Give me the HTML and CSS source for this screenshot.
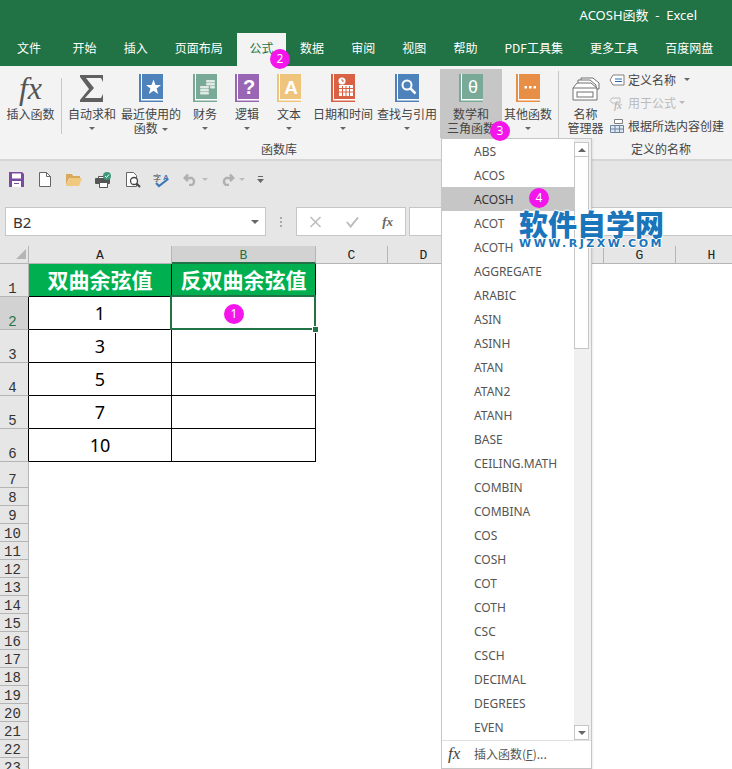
FILE: index.html
```html
<!DOCTYPE html>
<html>
<head>
    <meta charset="UTF-8">
    <title>ACOSH函数 - Excel</title>
    <link rel="stylesheet" href="styles.css">
</head>
<body>
<svg class="defs" width="0" height="0">
    <symbol id="book" viewBox="0 0 24 28">
        <rect width="24" height="28" fill="currentColor"/>
        <rect x="2" width="1" height="26" fill="#fff"/>
        <rect x="2" y="25" width="22" height="1.5" fill="#fff"/>
    </symbol>
</svg>
<div id="app">
    <div class="titlebar"><span class="title">ACOSH函数 &nbsp;-&nbsp; Excel</span></div>
    <div class="tabs">
        <span class="tab first">文件</span>
        <span class="tab second">开始</span>
        <span class="tab">插入</span>
        <span class="tab">页面布局</span>
        <span class="tab active">公式</span>
        <span class="tab">数据</span>
        <span class="tab">审阅</span>
        <span class="tab">视图</span>
        <span class="tab">帮助</span>
        <span class="tab">PDF工具集</span>
        <span class="tab">更多工具</span>
        <span class="tab">百度网盘</span>
    </div>

    <div class="ribbon">
        <div class="group-items">
            <div class="rib-item">
                <span class="fx-big">fx</span>
                <span class="rib-label">插入函数</span>
            </div>
            <div class="rib-divider"></div>
            <div class="rib-item">
                <svg class="rib-icon" viewBox="0 0 24 28"><path fill="#606060" d="M0 1H23V8L21 4H6L14 14L5 24H21L23 20V28H0V26L9 15L0 3Z"/></svg>
                <span class="rib-label">自动求和</span>
                <span class="caret"></span>
            </div>
            <div class="rib-item recent">
                <svg class="rib-icon book-blue" viewBox="0 0 24 28"><use href="#book"/><path fill="#fff" d="M14.5 5.5l2 5.4 5.5.2-4.4 3.4 1.6 5.5-4.7-3.2-4.7 3.2 1.6-5.5L7 11.100l5.500-.2z"/></svg>
                <span class="rib-label">最近使用的<br>函数 <span class="caret inline"></span></span>
            </div>
            <div class="rib-item">
                <svg class="rib-icon book-green" viewBox="0 0 24 28"><use href="#book"/><g fill="#dfeae5"><rect x="7" y="12" width="9" height="2.500" rx="1"/><rect x="7" y="15" width="9" height="2.500" rx="1"/><rect x="7" y="18" width="9" height="2.500" rx="1"/><rect x="13" y="6" width="9" height="2.500" rx="1"/><rect x="13" y="9" width="9" height="2.500" rx="1"/><rect x="17" y="12" width="5" height="2.500" rx="1"/></g></svg>
                <span class="rib-label">财务</span>
                <span class="caret"></span>
            </div>
            <div class="rib-item">
                <svg class="rib-icon book-purple" viewBox="0 0 24 28"><use href="#book"/><text class="book-char" x="14" y="20" font-size="20">?</text></svg>
                <span class="rib-label">逻辑</span>
                <span class="caret"></span>
            </div>
            <div class="rib-item">
                <svg class="rib-icon book-yellow" viewBox="0 0 24 28"><use href="#book"/><text class="book-char" x="14" y="20" font-size="19">A</text></svg>
                <span class="rib-label">文本</span>
                <span class="caret"></span>
            </div>
            <div class="rib-item">
                <svg class="rib-icon book-red" viewBox="0 0 24 28"><use href="#book"/><circle cx="11" cy="7" r="3.500" fill="#fff"/><path d="M11 5v2h2" stroke="#d96244" fill="none"/><path fill="#fff" d="M8 11h14v11H8z"/><path stroke="#d96244" d="M8 14.500h14M8 18h14M11.500 12v10M15 12v10M18.500 12v10"/></svg>
                <span class="rib-label">日期和时间</span>
                <span class="caret"></span>
            </div>
            <div class="rib-item">
                <svg class="rib-icon book-blue" viewBox="0 0 24 28"><use href="#book"/><circle cx="12" cy="11" r="4.500" fill="none" stroke="#fff" stroke-width="2"/><path stroke="#fff" stroke-width="2.500" d="M15.500 14.500l5 5"/></svg>
                <span class="rib-label">查找与引用</span>
                <span class="caret"></span>
            </div>
            <div class="rib-item pressed">
                <svg class="rib-icon book-green" viewBox="0 0 24 28"><use href="#book"/><text class="book-char thin" x="14" y="19" font-size="18">θ</text></svg>
                <span class="rib-label">数学和<br>三角函数</span>
            </div>
            <div class="rib-item">
                <svg class="rib-icon book-orange" viewBox="0 0 24 28"><use href="#book"/><g fill="#fff"><rect x="8.500" y="12" width="2.500" height="2.500"/><rect x="13" y="12" width="2.500" height="2.500"/><rect x="17.500" y="12" width="2.500" height="2.500"/></g></svg>
                <span class="rib-label">其他函数</span>
                <span class="caret"></span>
            </div>
        </div>
        <div class="group-label lib-label">函数库</div>
        <div class="rib-divider tall"></div>
        <div class="names-group">
            <div class="names-items">
                <div class="rib-item name-mgr">
                    <svg class="mgr-icon" viewBox="0 0 28 24"><g fill="#fff" stroke="#707070"><path d="M9 1h12l6 5v6H9z"/><path d="M6 3h12l6 5v6H6z"/><path d="M1 11 5 6h14l6 5v12H1z"/><path d="M1 11h24"/><rect x="5" y="15" width="16" height="5"/></g></svg>
                    <span class="rib-label">名称<br>管理器</span>
                </div>
                <div class="name-cmds">
                    <div class="name-cmd">
                        <svg class="cmd-icon" viewBox="0 0 16 14"><path fill="#fff" stroke="#808080" d="M4 2h11v10H4L1 7z"/><path stroke="#2b6cb0" d="M6 6h7M6 8.500h7"/></svg>
                        <span>定义名称</span><span class="caret side"></span>
                    </div>
                    <div class="name-cmd off">
                        <svg class="cmd-icon" viewBox="0 0 16 14"><path fill="none" stroke="#bdbdbd" d="M3 2h8v5H3L1 4.500z"/><text class="cmd-fx" x="5" y="13" font-size="11">fx</text></svg>
                        <span>用于公式</span><span class="caret side off"></span>
                    </div>
                    <div class="name-cmd">
                        <svg class="cmd-icon" viewBox="0 0 16 16"><path fill="#fff" stroke="#808080" d="M5.500 1.500h8v4h-8z"/><path fill="#dfe7ef" stroke="#6d84a0" d="M1.500 7.500h13v7h-13zM1.500 11h13M6 7.500v7M10.500 7.500v7"/></svg>
                        <span>根据所选内容创建</span>
                    </div>
                </div>
            </div>
            <div class="group-label names-label">定义的名称</div>
        </div>
    </div>

    <div class="qat">
        <svg class="q q-save" viewBox="0 0 15 15"><path fill="#7a4b9e" d="M0 0h13l2 2v13H0z"/><rect x="3" y="1.500" width="9" height="5" fill="#fff"/><rect x="3" y="9" width="9" height="6" fill="#fff"/><rect x="5" y="11" width="5" height="1" fill="#7a4b9e"/></svg>
        <svg class="q q-new" viewBox="0 0 12 15"><path fill="#fff" stroke="#666" d="M.5.500h7l4 4v10H.500z"/><path fill="none" stroke="#666" d="M7.500.500v4h4"/></svg>
        <svg class="q q-open" viewBox="0 0 16 13"><path fill="#d9a95c" d="M0 1h6l1 2h7v2H3L0 12z"/><path fill="#f0c97f" d="M3.500 5H16l-3 8H0z"/></svg>
        <svg class="q q-print" viewBox="0 0 17 16"><path fill="#fff" stroke="#555" d="M3.500 4.500h7v4h-7z"/><rect y="6" width="15" height="6" rx="1" fill="#555"/><path fill="#fff" stroke="#555" d="M4.500 10.500h8v5h-8z"/><circle cx="12" cy="4" r="4" fill="#3d9a78"/><path stroke="#fff" fill="none" d="M10 4l1.500 1.500L14 2.500"/></svg>
        <svg class="q q-preview" viewBox="0 0 15 16"><path fill="#fff" stroke="#666" d="M.5.500h7l3 3v11H.500z"/><circle cx="8" cy="9" r="3.500" fill="#fff" stroke="#444" stroke-width="1.300"/><path stroke="#444" stroke-width="2" d="M10.500 11.500l3.500 3.500"/></svg>
        <svg class="q q-spell" viewBox="0 0 17 16"><text class="q-zi" x="0" y="9" font-size="8">字</text><text class="q-a" x="10" y="8" font-size="8">A</text><path fill="none" stroke="#3f78b5" stroke-width="2.200" d="M3 11l3 3 9-7"/></svg>
        <svg class="q q-undo" viewBox="0 0 15 13"><path fill="none" stroke="#b0b0b0" stroke-width="2.500" d="M5 1.500 1.800 5 5 8M2 5h7a4 4 0 0 1 0 7H6"/></svg>
        <span class="caret dim"></span>
        <svg class="q q-redo" viewBox="0 0 15 13"><path fill="none" stroke="#b0b0b0" stroke-width="2.500" d="M10 1.500 13.200 5 10 8M13 5H6a4 4 0 0 0 0 7h3"/></svg>
        <span class="caret dim"></span>
        <svg class="q q-custom" viewBox="0 0 7 7"><path fill="#666" d="M1 0h5v1H1zM0 3h7L3.500 7z"/></svg>
    </div>

    <div class="formula-row">
        <div class="namebox"><span>B2</span><span class="caret big"></span></div>
        <div class="dots"></div>
        <div class="fx-btns">
            <svg class="fb" viewBox="0 0 12 12"><path stroke="#bdbdbd" stroke-width="1.600" d="M1 1l10 10M11 1 1 11"/></svg>
            <svg class="fb" viewBox="0 0 14 12"><path fill="none" stroke="#bdbdbd" stroke-width="2" d="M1 6l4 5 8-10"/></svg>
            <span class="fx-small">fx</span>
        </div>
        <div class="formula-input"></div>
    </div>

    <div class="sheet">
        <div class="corner"><svg viewBox="0 0 10 10"><path fill="#b5b5b5" d="M10 0v10H0z"/></svg></div>
        <div class="colhead">A</div>
        <div class="colhead selected">B</div>
        <div class="colhead">C</div>
        <div class="colhead">D</div>
        <div class="colhead">E</div>
        <div class="colhead">F</div>
        <div class="colhead">G</div>
        <div class="colhead">H</div>

        <div class="rowhead">1</div>
        <div class="cell head">双曲余弦值</div>
        <div class="cell head">反双曲余弦值</div>

        <div class="rowhead selected dark">2</div>
        <div class="cell">1</div>
        <div class="cell active"></div>

        <div class="rowhead dark">3</div>
        <div class="cell">3</div>
        <div class="cell"></div>

        <div class="rowhead dark">4</div>
        <div class="cell">5</div>
        <div class="cell"></div>

        <div class="rowhead dark">5</div>
        <div class="cell">7</div>
        <div class="cell"></div>

        <div class="rowhead dark">6</div>
        <div class="cell">10</div>
        <div class="cell"></div>

        <div class="rowhead">7</div>
        <div class="rowhead">8</div>
        <div class="rowhead">9</div>
        <div class="rowhead">10</div>
        <div class="rowhead">11</div>
        <div class="rowhead">12</div>
        <div class="rowhead">13</div>
        <div class="rowhead">14</div>
        <div class="rowhead">15</div>
        <div class="rowhead">16</div>
        <div class="rowhead">17</div>
        <div class="rowhead">18</div>
        <div class="rowhead">19</div>
        <div class="rowhead">20</div>
        <div class="rowhead">21</div>
        <div class="rowhead">22</div>
        <div class="rowhead">23</div>
    </div>

    <div class="menu">
        <div class="menu-body">
            <div class="menu-list">
                <div class="menu-item">ABS</div>
                <div class="menu-item">ACOS</div>
                <div class="menu-item hover">ACOSH</div>
                <div class="menu-item">ACOT</div>
                <div class="menu-item">ACOTH</div>
                <div class="menu-item">AGGREGATE</div>
                <div class="menu-item">ARABIC</div>
                <div class="menu-item">ASIN</div>
                <div class="menu-item">ASINH</div>
                <div class="menu-item">ATAN</div>
                <div class="menu-item">ATAN2</div>
                <div class="menu-item">ATANH</div>
                <div class="menu-item">BASE</div>
                <div class="menu-item">CEILING.MATH</div>
                <div class="menu-item">COMBIN</div>
                <div class="menu-item">COMBINA</div>
                <div class="menu-item">COS</div>
                <div class="menu-item">COSH</div>
                <div class="menu-item">COT</div>
                <div class="menu-item">COTH</div>
                <div class="menu-item">CSC</div>
                <div class="menu-item">CSCH</div>
                <div class="menu-item">DECIMAL</div>
                <div class="menu-item">DEGREES</div>
                <div class="menu-item">EVEN</div>
            </div>
            <div class="scrollbar">
                <div class="sb-btn"><span class="tri up"></span></div>
                <div class="sb-thumb"></div>
                <div class="sb-track"></div>
                <div class="sb-btn"><span class="tri"></span></div>
            </div>
        </div>
        <div class="menu-foot"><span class="fx-foot">fx</span><span>插入函数(<u>F</u>)...</span></div>
    </div>

    <div class="badge b1">1</div>
    <div class="badge b2">2</div>
    <div class="badge b3">3</div>
    <div class="badge b4">4</div>

    <div class="watermark">
        <div class="wm-cn">软件自学网</div>
        <div class="wm-en">WWW.RJZXW.COM</div>
    </div>
</div>
</body>
</html>
```

FILE: styles.css
```css
html, body {
    margin: 0;
    padding: 0;
    overflow: hidden;
}
body {
    font-family: "Noto Sans CJK SC", "Noto Sans", sans-serif;
    font-size: 12px;
    color: #444;
}
.defs {
    position: absolute;
}
#app {
    position: relative;
    width: 732px;
    height: 769px;
    overflow: hidden;
    background: #fff;
    display: flex;
    flex-direction: column;
}

/* title + tabs */
.titlebar {
    height: 33px;
    flex: none;
    background: #217346;
    color: #fff;
    display: flex;
    justify-content: flex-end;
    align-items: center;
    padding: 0 35px 4px 0;
    box-sizing: border-box;
}
.title {
    font-family: "Noto Sans", "Noto Sans CJK SC", sans-serif;
    font-size: 13px;
}
.tabs {
    height: 33px;
    flex: none;
    background: #217346;
    color: #fff;
    display: flex;
    padding-left: 4px;
}
.tab {
    padding: 0 13px;
    margin-right: 1.1px;
    line-height: 29px;
    white-space: nowrap;
}
.tab.second {
    margin-left: 4.5px;
}
.tab.active {
    background: #f3f3f3;
    color: #217346;
    padding: 0 12.500px;
}

/* ribbon */
.ribbon {
    height: 95px;
    flex: none;
    box-sizing: border-box;
    background: #f3f3f3;
    border-bottom: 2px solid #d6d6d6;
    display: grid;
    grid-template-columns: 558px 2px 172px;
    grid-template-rows: 72px 18px;
    padding-top: 3px;
}
.group-items {
    display: grid;
    grid-template-columns: 61px 1px 60px 62px 42px 42px 42px 66px 62px 64px 52px;
}
.rib-item {
    display: flex;
    flex-direction: column;
    align-items: center;
    white-space: nowrap;
    padding-top: 5px;
    height: 69px;
    box-sizing: border-box;
}
.rib-item.recent {
    padding-right: 4px;
}
.rib-item.pressed {
    background: #c6c6c6;
    margin-left: 2px;
}
.rib-icon {
    width: 24px;
    height: 28px;
    flex: none;
}
.rib-label {
    line-height: 14px;
    margin-top: 5px;
    text-align: center;
}
.rib-divider {
    background: #c8c8c8;
    height: 56px;
    width: 1px;
    margin-top: 9px;
}
.rib-divider.tall {
    grid-column: 2;
    grid-row: 1 / 3;
    height: 74px;
    margin-top: 2px;
}
.caret {
    display: block;
    width: 0;
    height: 0;
    border-left: 3px solid transparent;
    border-right: 3px solid transparent;
    border-top: 3px solid #666;
    margin-top: 6px;
}
.caret.inline {
    display: inline-block;
    vertical-align: middle;
    margin: 0 0 0 2px;
}
.caret.side {
    display: inline-block;
    margin: 0 0 0 8px;
    vertical-align: middle;
}
.caret.off {
    border-top-color: #bbb;
    margin-left: 3px;
}
.caret.dim {
    border-top-color: #bbb;
    margin: 0;
}
.caret.big {
    border-left-width: 4px;
    border-right-width: 4px;
    border-top-width: 4px;
    margin: 0;
}
.fx-big {
    font-family: "Liberation Serif", serif;
    font-style: italic;
    font-size: 32px;
    line-height: 28px;
    color: #555;
}
.book-blue { color: #4e82bb; }
.book-green { color: #79a997; }
.book-purple { color: #9966b5; }
.book-yellow { color: #efc57e; }
.book-red { color: #d96244; }
.book-orange { color: #e78f47; }
.book-char {
    font-family: "Liberation Sans", sans-serif;
    font-weight: bold;
    fill: #fff;
    text-anchor: middle;
}
.book-char.thin {
    font-weight: normal;
}
.group-label {
    text-align: center;
    line-height: 16px;
}
.lib-label {
    grid-column: 1;
    grid-row: 2;
}
.names-group {
    grid-column: 3;
    grid-row: 1 / 3;
    display: flex;
    flex-direction: column;
}
.names-label {
    padding-left: 30px;
}
.names-items {
    display: flex;
    height: 72px;
}
.name-mgr {
    width: 47px;
    margin-left: 2px;
    flex: none;
}
.mgr-icon {
    width: 28px;
    height: 24px;
    margin-top: 3px;
    flex: none;
}
.name-mgr .rib-label {
    margin-top: 6px;
}
.name-cmds {
    margin-top: -1px;
}
.name-cmd {
    display: flex;
    align-items: center;
    height: 23px;
    white-space: nowrap;
}
.name-cmd.off {
    color: #bbb;
}
.cmd-icon {
    width: 16px;
    height: 16px;
    margin-right: 3px;
    flex: none;
}
.cmd-fx {
    font-family: "Liberation Serif", serif;
    font-style: italic;
    fill: #aaa;
}

/* quick access */
.qat {
    height: 37px;
    flex: none;
    background: #e6e6e6;
    display: flex;
    align-items: center;
    padding: 0 0 0 9px;
}
.q {
    flex: none;
}
.q-save { width: 15px; height: 15px; }
.q-new { width: 12px; height: 15px; margin-left: 15px; }
.q-open { width: 16px; height: 13px; margin-left: 15px; }
.q-print { width: 17px; height: 16px; margin-left: 13px; }
.q-preview { width: 15px; height: 16px; margin-left: 14px; }
.q-spell { width: 17px; height: 16px; margin-left: 12px; }
.q-undo { width: 15px; height: 13px; margin-left: 13px; margin-right: 4px; }
.q-redo { width: 15px; height: 13px; margin-left: 12px; margin-right: 4px; }
.q-custom { width: 7px; height: 7px; margin-left: 12px; }
.q-zi { fill: #444; }
.q-a {
    fill: #3f78b5;
    font-family: "Liberation Sans", sans-serif;
    font-weight: bold;
}

/* formula bar */
.formula-row {
    height: 48px;
    flex: none;
    box-sizing: border-box;
    background: #e6e6e6;
    display: flex;
    padding: 9px 0 10px 5px;
}
.namebox {
    width: 261px;
    box-sizing: border-box;
    background: #fff;
    border: 1px solid #c6c6c6;
    display: flex;
    align-items: center;
    justify-content: space-between;
    padding: 0 6px 0 7px;
    font-family: "Noto Sans", sans-serif;
    font-size: 15px;
    color: #333;
}
.dots {
    width: 2px;
    height: 10px;
    margin: 10px 14px 0 14px;
    background: repeating-linear-gradient(#aaa 0 2px, transparent 2px 4px);
}
.fx-btns {
    width: 110px;
    box-sizing: border-box;
    background: #fff;
    border: 1px solid #c6c6c6;
    display: flex;
    align-items: center;
    justify-content: space-between;
    padding: 0 12px;
}
.fb {
    width: 13px;
    height: 12px;
}
.fx-small {
    font-family: "Liberation Serif", serif;
    font-style: italic;
    font-weight: bold;
    font-size: 13px;
    color: #666;
}
.formula-input {
    flex: 1;
    margin-left: 3px;
    background: #fff;
    border: 1px solid #c6c6c6;
    border-right: none;
}

/* sheet */
.sheet {
    flex: 1;
    overflow: hidden;
    display: grid;
    grid-template-columns: 29px 143px 144px 72px 72px 72px 72px 72px 72px;
    grid-template-rows: 18px repeat(6, 33px) 26px repeat(16, 18px);
    background: #fff;
}
.corner {
    background: #e6e6e6;
    border-right: 1px solid #b5b5b5;
    border-bottom: 1px solid #b5b5b5;
    box-sizing: border-box;
    padding: 3px 3px 2px 16px;
}
.corner svg {
    display: block;
    width: 10px;
    height: 10px;
}
.colhead {
    background: #e6e6e6;
    border-right: 1px solid #b5b5b5;
    box-sizing: border-box;
    border-bottom: 1px solid #b5b5b5;
    text-align: center;
    font-family: "Liberation Mono", monospace;
    font-size: 13px;
    line-height: 20px;
    color: #222;
}
.colhead.selected {
    background: #d2d2d2;
    color: #217346;
    border-bottom: 2px solid #217346;
}
.rowhead {
    grid-column: 1;
    background: #e6e6e6;
    border-right: 1px solid #b5b5b5;
    border-bottom: 1px solid #b5b5b5;
    box-sizing: border-box;
    font-family: "Liberation Mono", monospace;
    font-size: 14px;
    line-height: 14px;
    color: #333;
    display: flex;
    align-items: flex-end;
    justify-content: center;
    padding-right: 3px;
}
.rowhead.dark {
    border-right-color: #000;
}
.rowhead.selected {
    background: #d2d2d2;
    color: #217346;
}
.cell {
    box-sizing: border-box;
    border-right: 1px solid #000;
    border-bottom: 1px solid #000;
    text-align: center;
    font-size: 18px;
    line-height: 32px;
    color: #000;
    font-family: "Noto Sans", sans-serif;
}
.cell.head {
    background: #00b050;
    color: #fff;
    font-family: "Noto Sans CJK SC", sans-serif;
    font-weight: bold;
    font-size: 21px;
    line-height: 31px;
}
.cell.active {
    position: relative;
}
.cell.active::before {
    content: "";
    position: absolute;
    left: -2px;
    top: -2px;
    right: -1px;
    bottom: -1px;
    border: 2px solid #217346;
}
.cell.active::after {
    content: "";
    position: absolute;
    right: -3px;
    bottom: -3px;
    width: 5px;
    height: 5px;
    background: #217346;
    border: 1px solid #fff;
    box-sizing: content-box;
    transform: translate(1px, 1px);
}

/* dropdown */
.menu {
    position: absolute;
    left: 441px;
    top: 138px;
    width: 151px;
    height: 631px;
    box-sizing: border-box;
    background: #fff;
    border: 1px solid #c6c6c6;
    box-shadow: 1px 1px 2px rgba(0,0,0,0.08);
    display: flex;
    flex-direction: column;
}
.menu-body {
    display: flex;
    flex: none;
    height: 601px;
}
.menu-list {
    width: 132px;
    flex: none;
}
.menu-item {
    height: 24px;
    line-height: 26px;
    padding-left: 32px;
    font-family: "Noto Sans", sans-serif;
    font-size: 12px;
    color: #555;
}
.menu-item.hover {
    background: #c6c6c6;
    color: #333;
}
.scrollbar {
    flex: 1;
    display: flex;
    flex-direction: column;
    background: #f0f0f0;
    padding-top: 3px;
}
.sb-btn {
    height: 15px;
    width: 15px;
    box-sizing: border-box;
    background: #fff;
    border: 1px solid #c6c6c6;
    display: flex;
    align-items: center;
    justify-content: center;
    flex: none;
}
.tri {
    width: 0;
    height: 0;
    border-left: 4px solid transparent;
    border-right: 4px solid transparent;
    border-top: 4px solid #666;
}
.tri.up {
    border-top: none;
    border-bottom: 4px solid #666;
}
.sb-thumb {
    width: 15px;
    height: 192px;
    box-sizing: border-box;
    background: #fff;
    border: 1px solid #c6c6c6;
    border-top: none;
    flex: none;
}
.sb-track {
    flex: 1;
    width: 15px;
}
.menu-foot {
    flex: 1;
    border-top: 1px solid #e1e1e1;
    display: flex;
    align-items: center;
    color: #555;
    padding-bottom: 2px;
}
.fx-foot {
    font-family: "Liberation Serif", serif;
    font-style: italic;
    font-size: 17px;
    width: 26px;
    padding-left: 6px;
    color: #444;
}

/* callouts */
.badge {
    position: absolute;
    width: 20px;
    height: 20px;
    border-radius: 50%;
    background: #f315e9;
    color: #fff;
    font-family: "Noto Sans", sans-serif;
    font-size: 12px;
    line-height: 20px;
    text-align: center;
}
.b1 { left: 224px; top: 304px; }
.b2 { left: 270px; top: 49px; }
.b3 { left: 490px; top: 121px; }
.b4 { left: 529px; top: 188px; }

.watermark {
    position: absolute;
    left: 519px;
    top: 208px;
    width: 146px;
    color: #1a75bb;
    text-shadow: 1px 0 #fff, -1px 0 #fff, 0 1px #fff, 0 -1px #fff;
}
.wm-cn {
    font-family: "Noto Sans CJK SC", sans-serif;
    font-weight: 900;
    font-size: 29px;
    line-height: 30px;
    white-space: nowrap;
}
.wm-en {
    font-family: "DejaVu Sans", sans-serif;
    font-weight: bold;
    font-size: 11px;
    line-height: 11px;
    letter-spacing: 2.5px;
    white-space: nowrap;
}
```
